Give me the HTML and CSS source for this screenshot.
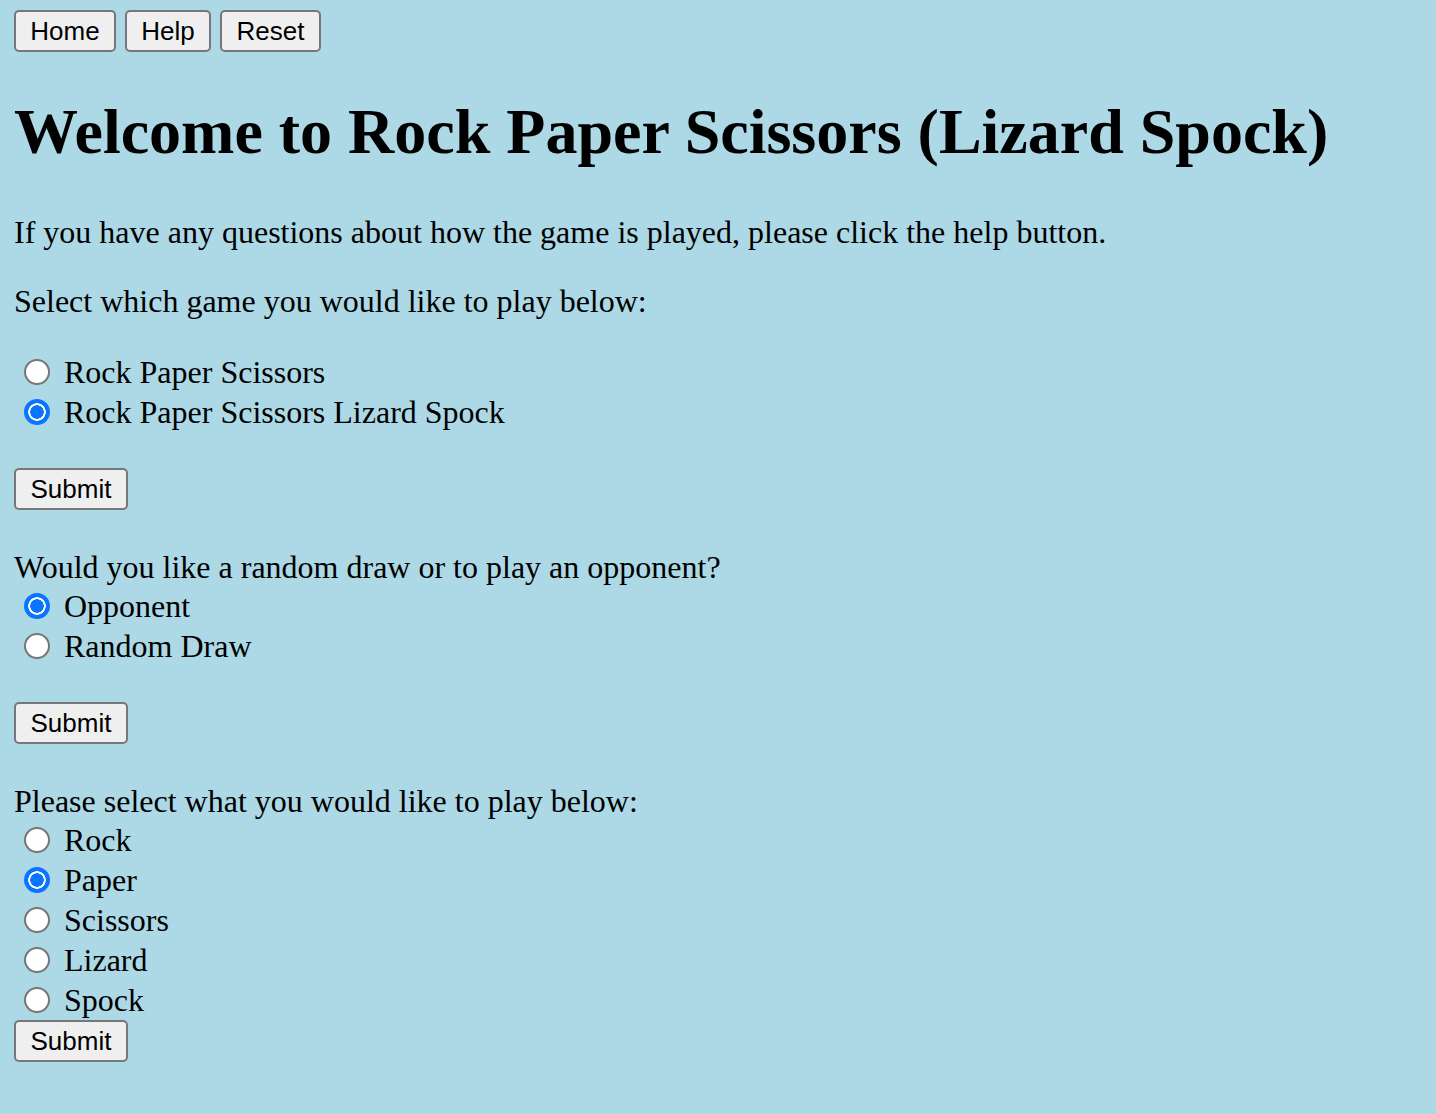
FILE: index.html
```html
<!DOCTYPE html>
<html lang="en">
<head>
<meta charset="utf-8">
<title>Rock Paper Scissors (Lizard Spock)</title>
<link rel="stylesheet" href="styles.css">
</head>
<body>
<nav class="nav">
  <button class="btn btn-home" type="button">Home</button>
  <button class="btn btn-help" type="button">Help</button>
  <button class="btn btn-reset" type="button">Reset</button>
</nav>
<h1 class="title">Welcome to Rock Paper Scissors (Lizard Spock)</h1>
<p class="para">If you have any questions about how the game is played, please click the help button.</p>
<form class="form form-game">
  <p class="para">Select which game you would like to play below:</p>
  <label class="opt"><input class="radio" type="radio" name="game"> Rock Paper Scissors</label>
  <label class="opt"><input class="radio" type="radio" name="game" checked> Rock Paper Scissors Lizard Spock</label>
  <div class="blank"></div>
  <div class="submit-row"><button class="btn btn-submit" type="button">Submit</button></div>
</form>
<form class="form form-mode">
  <div class="question">Would you like a random draw or to play an opponent?</div>
  <label class="opt"><input class="radio" type="radio" name="mode" checked> Opponent</label>
  <label class="opt"><input class="radio" type="radio" name="mode"> Random Draw</label>
  <div class="blank"></div>
  <div class="submit-row"><button class="btn btn-submit" type="button">Submit</button></div>
</form>
<form class="form form-move">
  <div class="question">Please select what you would like to play below:</div>
  <label class="opt"><input class="radio" type="radio" name="move"> Rock</label>
  <label class="opt"><input class="radio" type="radio" name="move" checked> Paper</label>
  <label class="opt"><input class="radio" type="radio" name="move"> Scissors</label>
  <label class="opt"><input class="radio" type="radio" name="move"> Lizard</label>
  <label class="opt"><input class="radio" type="radio" name="move"> Spock</label>
  <div class="submit-row tight"><button class="btn btn-submit" type="button">Submit</button></div>
</form>
</body>
</html>
```
FILE: styles.css
```css
html, body {
  background: #add8e6;
}
body {
  margin: 0;
  padding: 10px 14px 0;
  font-family: "Liberation Serif", "Times New Roman", serif;
  font-size: 32px;
  color: #000;
}
.nav {
  display: flex;
  gap: 9px;
}
.btn {
  font-family: "Liberation Sans", Arial, sans-serif;
  font-size: 26px;
  height: 42px;
  padding: 0 14px;
  background: #efefef;
  border: 2px solid #777;
  border-radius: 5px;
  color: #000;
  line-height: 1;
  box-sizing: border-box;
}
.btn-home { width: 102px; }
.btn-help { width: 86px; }
.btn-reset { width: 101px; }
.btn-submit { width: 114px; }
.title {
  font-size: 64px;
  font-weight: bold;
  margin: 43px 0 45px;
  line-height: 74px;
}
.para {
  margin: 32px 0;
  line-height: 37px;
}
.form {
  display: flex;
  flex-direction: column;
  align-items: flex-start;
}
.form-game .para {
  margin-top: 0;
  margin-bottom: 32px;
}
.opt {
  display: flex;
  align-items: center;
  height: 40px;
  padding-left: 10px;
  white-space: pre;
}
.radio {
  appearance: none;
  -webkit-appearance: none;
  width: 26px;
  height: 26px;
  margin: 0 6px 0 0;
  border: 2px solid #767676;
  border-radius: 50%;
  background: #fff;
  box-sizing: border-box;
}
.radio:checked {
  border-color: #0a75ff;
  background: radial-gradient(circle, #0a75ff 0 6.5px, #fff 7px 8.5px, #0a75ff 9px);
}
.blank {
  height: 37px;
}
.submit-row {
  height: 40px;
  display: flex;
  align-items: center;
}
.submit-row.tight {
  height: 42px;
}
.form-mode {
  margin-top: 40px;
}
.form-move {
  margin-top: 40px;
}
.question {
  height: 37px;
  line-height: 37px;
}
```
